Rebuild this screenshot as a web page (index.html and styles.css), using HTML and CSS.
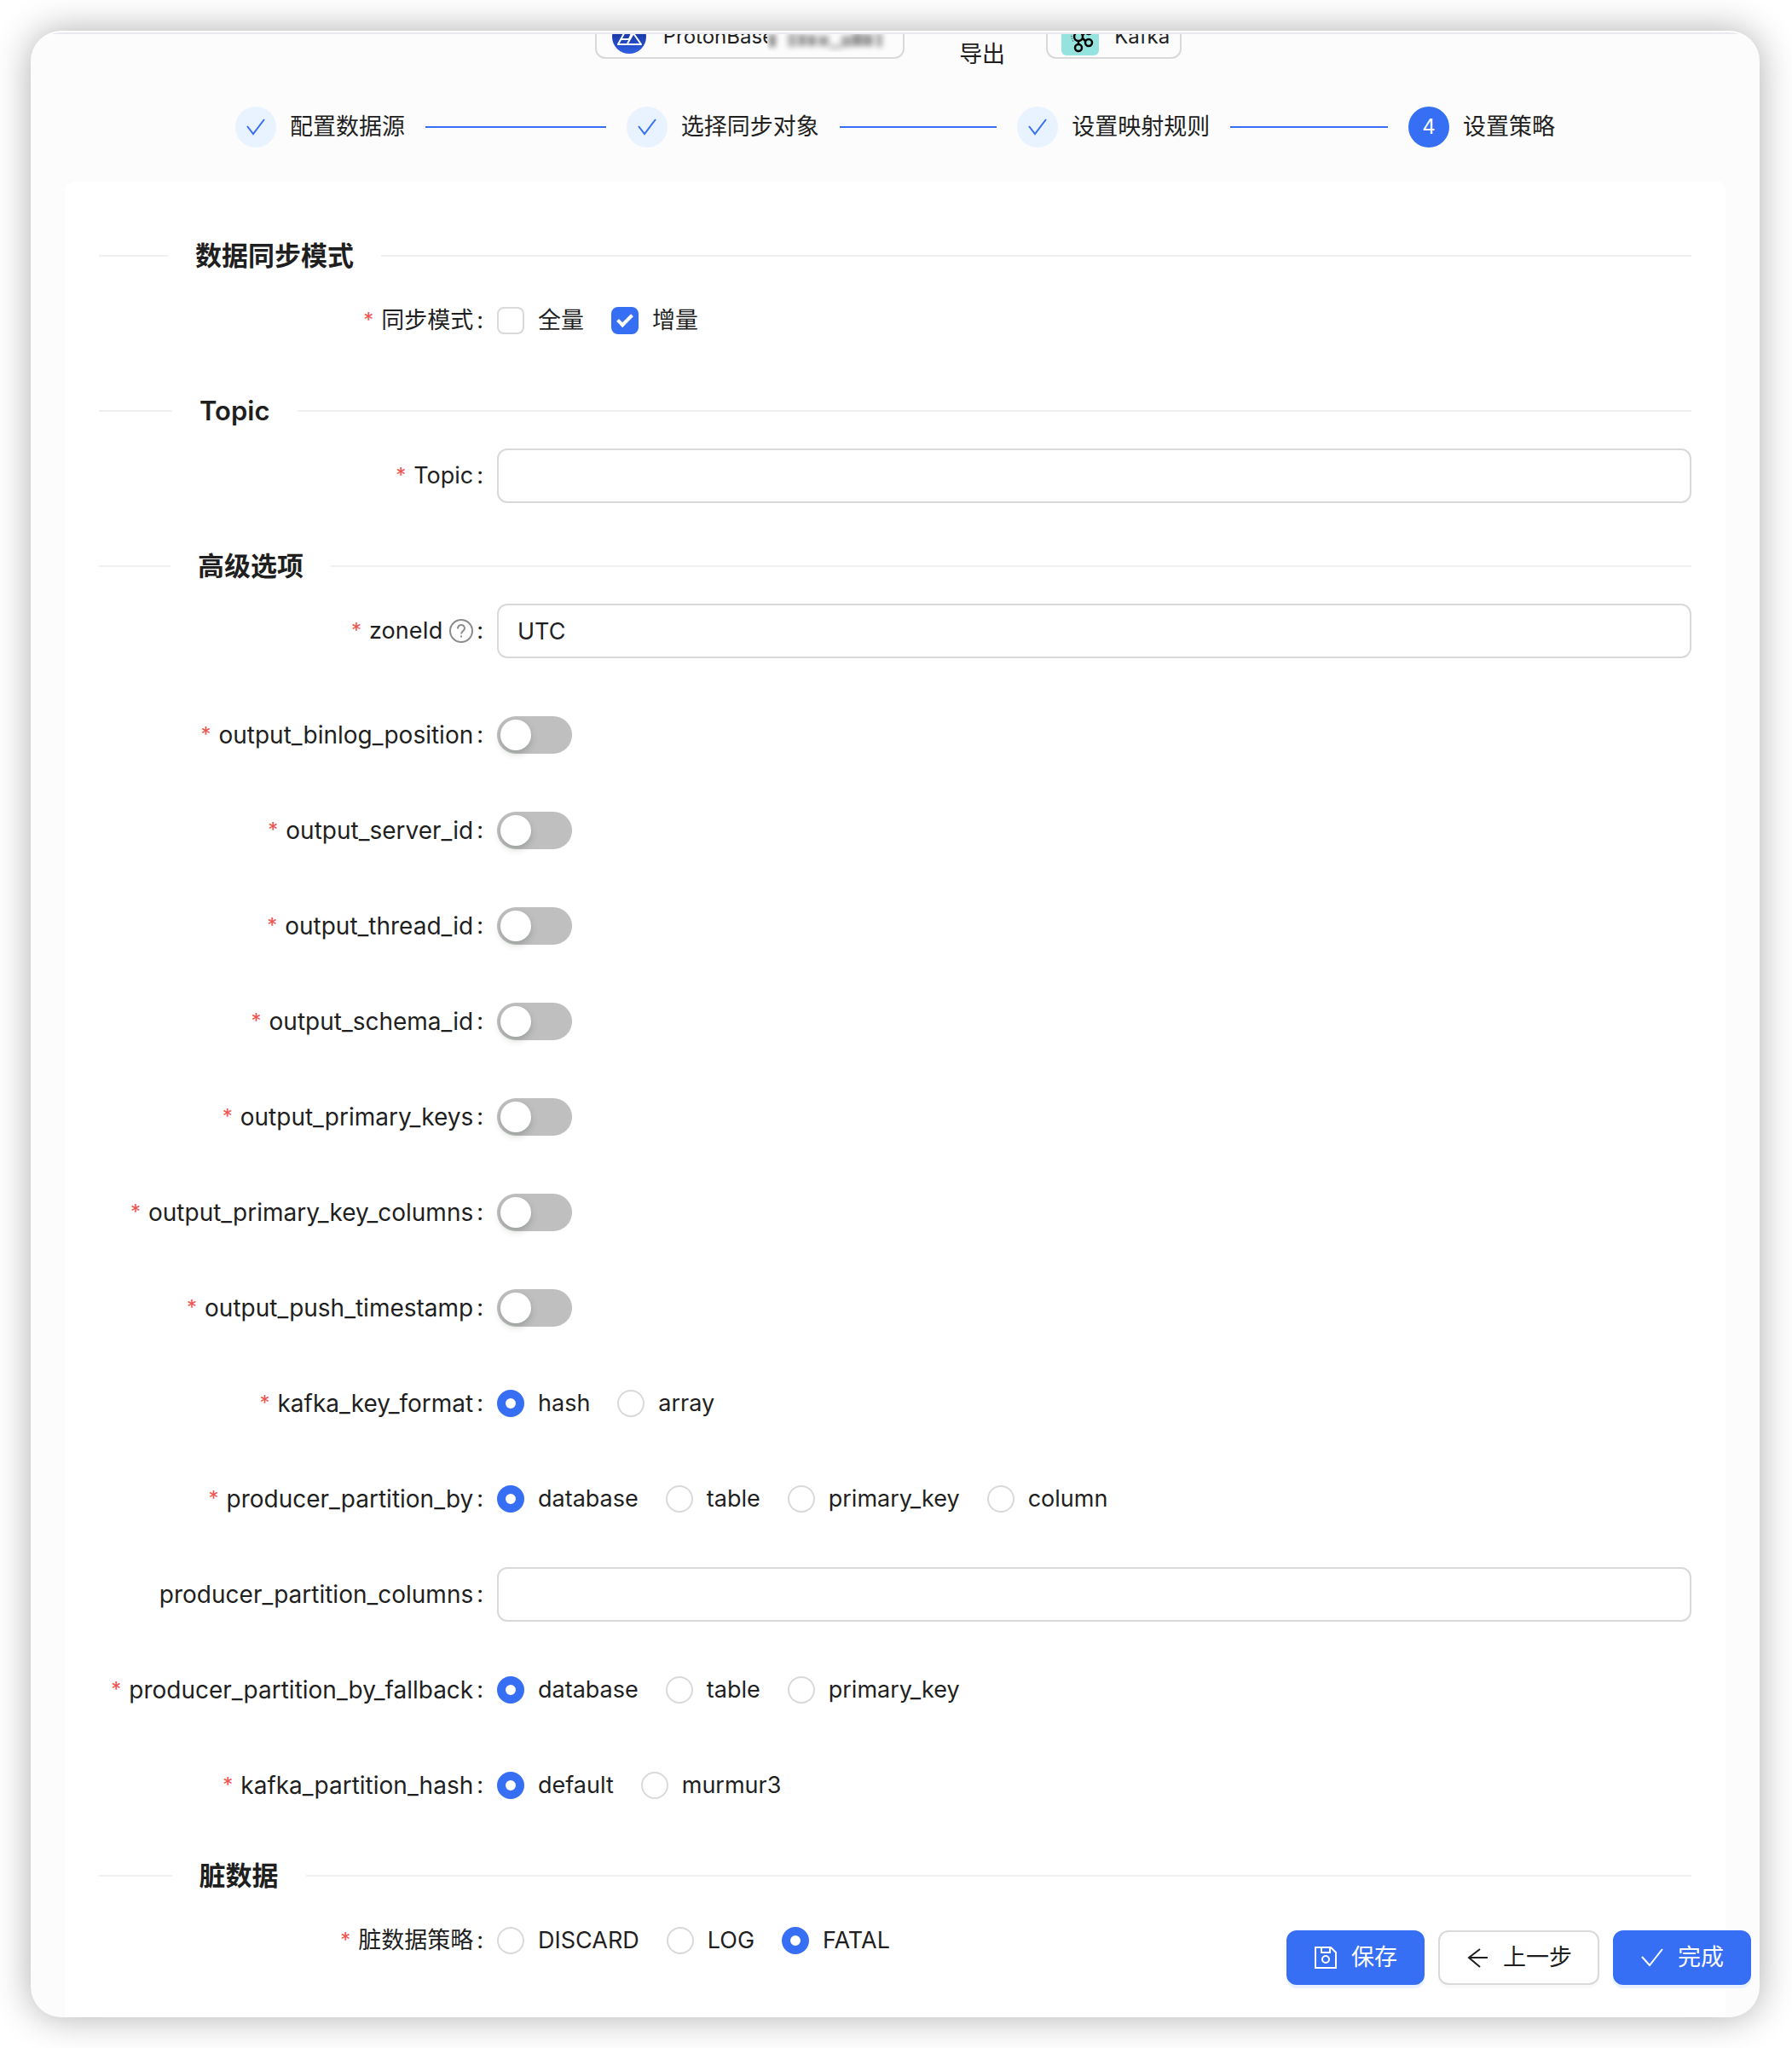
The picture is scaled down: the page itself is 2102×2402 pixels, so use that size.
FILE: index.html
```html
<!DOCTYPE html>
<html lang="zh-CN">

<head>
    <meta charset="UTF-8">
    <meta name="viewport" content="width=device-width, initial-scale=1.0">
    <title>设置策略</title>
    <link rel="stylesheet" href="styles.css">
</head>

<body>
    <main class="window">
        <header class="route">
            <div class="source">
                <svg class="source-icon" viewBox="0 0 44 44" aria-hidden="true">
                    <defs>
                        <linearGradient id="pb" x1="0" y1="0" x2="0" y2="1">
                            <stop offset="0.3" stop-color="#16309a" />
                            <stop offset="1" stop-color="#3060e4" />
                        </linearGradient>
                    </defs>
                    <circle cx="22" cy="22" r="20" fill="url(#pb)" />
                    <path d="M20 11L9 31H36L27 18L20 30M13 25H22L27 13" fill="none" stroke="#fff" stroke-width="2" stroke-linejoin="round" />
                </svg>
                <span>ProtonBase</span>
                <svg class="redacted" viewBox="0 0 147 36" aria-hidden="true">
                    <rect width="147" height="36" fill="#fcfcfc" />
                    <g class="smudge">
                        <rect x="2" y="15" width="8" height="15" fill="#8c8c8c" />
                        <rect x="24" y="14" width="10" height="16" fill="#b4b4b4" />
                        <rect x="36" y="15" width="10" height="14" fill="#a0a0a0" />
                        <rect x="48" y="16" width="9" height="13" fill="#969696" />
                        <rect x="60" y="17" width="12" height="12" fill="#a4a4a4" />
                        <rect x="73" y="27" width="14" height="6" fill="#c8c8c8" />
                        <rect x="87" y="17" width="12" height="13" fill="#a8a8a8" />
                        <rect x="100" y="14" width="11" height="15" fill="#949494" />
                        <rect x="112" y="15" width="12" height="14" fill="#9a9a9a" />
                        <rect x="128" y="14" width="7" height="16" fill="#aaaaaa" />
                    </g>
                </svg>
            </div>
            <span class="direction">导出</span>
            <div class="source">
                <svg class="source-icon" viewBox="0 0 44 44" aria-hidden="true">
                    <rect width="44" height="44" rx="6" fill="#95e3df" />
                    <g fill="none" stroke="#000" stroke-width="2.500">
                        <circle cx="20" cy="9" r="4" />
                        <circle cx="20" cy="22" r="5" />
                        <circle cx="20" cy="35" r="4" />
                        <circle cx="32" cy="15" r="4" />
                        <circle cx="32" cy="29" r="4" />
                        <path d="M20 13v4M20 27v4M25 20l3-3M25 24l3 3" />
                    </g>
                    <path d="M13 15Q10 21 14 28" fill="none" stroke="#000" stroke-dasharray="1 2" />
                </svg>
                <span>Kafka</span>
            </div>
        </header>

        <ol class="steps">
            <li class="step">
                <span class="step-icon"><svg class="tick" viewBox="0 0 24 24"><path d="M2 11L9 20L22 3" /></svg></span>
                <span>配置数据源</span>
            </li>
            <li class="step">
                <span class="step-icon"><svg class="tick" viewBox="0 0 24 24"><path d="M2 11L9 20L22 3" /></svg></span>
                <span>选择同步对象</span>
            </li>
            <li class="step">
                <span class="step-icon"><svg class="tick" viewBox="0 0 24 24"><path d="M2 11L9 20L22 3" /></svg></span>
                <span>设置映射规则</span>
            </li>
            <li class="step">
                <span class="step-icon current">4</span>
                <span>设置策略</span>
            </li>
        </ol>

        <form class="panel">
            <h2 class="divider"><span>数据同步模式</span></h2>
            <div class="row" role="group" aria-labelledby="l-mode">
                <span class="label required" id="l-mode">同步模式</span>
                <div class="options">
                    <label><input type="checkbox">全量</label>
                    <label><input type="checkbox" checked>增量</label>
                </div>
            </div>

            <h2 class="divider"><span>Topic</span></h2>
            <div class="row">
                <label class="label required" for="topic">Topic</label>
                <input class="text" type="text" id="topic">
            </div>

            <h2 class="divider"><span>高级选项</span></h2>
            <div class="row zone">
                <label class="label required" for="zone">zoneId
                    <svg class="help" viewBox="0 0 28 28" aria-hidden="true">
                        <circle cx="14" cy="14" r="13" />
                        <path d="M10 11.500C10 5.500 18 5.500 18 11C18 14 14 14 14 17.500M14 19.500V21.500" />
                    </svg>
                </label>
                <input class="text" type="text" id="zone" value="UTC">
            </div>
            <div class="row">
                <label class="label param required" for="binlog">output_binlog_position</label>
                <input class="switch" type="checkbox" role="switch" id="binlog">
            </div>
            <div class="row">
                <label class="label param required" for="server">output_server_id</label>
                <input class="switch" type="checkbox" role="switch" id="server">
            </div>
            <div class="row">
                <label class="label param required" for="thread">output_thread_id</label>
                <input class="switch" type="checkbox" role="switch" id="thread">
            </div>
            <div class="row">
                <label class="label param required" for="schema">output_schema_id</label>
                <input class="switch" type="checkbox" role="switch" id="schema">
            </div>
            <div class="row">
                <label class="label param required" for="keys">output_primary_keys</label>
                <input class="switch" type="checkbox" role="switch" id="keys">
            </div>
            <div class="row">
                <label class="label param required" for="key-columns">output_primary_key_columns</label>
                <input class="switch" type="checkbox" role="switch" id="key-columns">
            </div>
            <div class="row">
                <label class="label param required" for="push">output_push_timestamp</label>
                <input class="switch" type="checkbox" role="switch" id="push">
            </div>
            <div class="row" role="radiogroup" aria-labelledby="l-format">
                <span class="label param required" id="l-format">kafka_key_format</span>
                <div class="options">
                    <label><input type="radio" name="format" checked>hash</label>
                    <label><input type="radio" name="format">array</label>
                </div>
            </div>
            <div class="row" role="radiogroup" aria-labelledby="l-by">
                <span class="label param required" id="l-by">producer_partition_by</span>
                <div class="options">
                    <label><input type="radio" name="by" checked>database</label>
                    <label><input type="radio" name="by">table</label>
                    <label><input type="radio" name="by">primary_key</label>
                    <label><input type="radio" name="by">column</label>
                </div>
            </div>
            <div class="row">
                <label class="label param" for="columns">producer_partition_columns</label>
                <input class="text" type="text" id="columns">
            </div>
            <div class="row" role="radiogroup" aria-labelledby="l-fallback">
                <span class="label param required" id="l-fallback">producer_partition_by_fallback</span>
                <div class="options">
                    <label><input type="radio" name="fallback" checked>database</label>
                    <label><input type="radio" name="fallback">table</label>
                    <label><input type="radio" name="fallback">primary_key</label>
                </div>
            </div>
            <div class="row" role="radiogroup" aria-labelledby="l-hash">
                <span class="label param required" id="l-hash">kafka_partition_hash</span>
                <div class="options">
                    <label><input type="radio" name="hash" checked>default</label>
                    <label><input type="radio" name="hash">murmur3</label>
                </div>
            </div>

            <h2 class="divider"><span>脏数据</span></h2>
            <div class="row" role="radiogroup" aria-labelledby="l-dirty">
                <span class="label required" id="l-dirty">脏数据策略</span>
                <div class="options">
                    <label><input type="radio" name="dirty">DISCARD</label>
                    <label><input type="radio" name="dirty">LOG</label>
                    <label><input type="radio" name="dirty" checked>FATAL</label>
                </div>
            </div>
        </form>

        <!-- floating actions, stay over the form -->
        <div class="actions">
            <button class="btn primary" type="button">
                <svg viewBox="0 0 28 28"><path d="M2 2H20L26 8V26H2ZM9 2V8H19V2" /><circle cx="14" cy="16" r="4" /></svg>
                保存
            </button>
            <button class="btn" type="button">
                <svg viewBox="0 0 28 28"><path d="M26 14H4M17 4L4 14L17 25" /></svg>
                上一步
            </button>
            <button class="btn primary" type="button">
                <svg viewBox="0 0 28 28"><path d="M2 13L11 23L26 4" /></svg>
                完成
            </button>
        </div>
    </main>
</body>

</html>
```

FILE: styles.css
```css
* {
    box-sizing: border-box;
}

body {
    margin: 0;
    padding: 36px 38px 36px 36px;
    background-color: #ffffff;
    color: #1f1f1f;
    font-family: Inter, "Noto Sans CJK SC", sans-serif;
    font-size: 27px;
    line-height: 44px;
}

.window {
    position: relative;
    min-height: calc(100vh - 72px);
    padding: 0 40px;
    overflow: hidden;
    background-color: #fcfcfc;
    border-top: 2px solid #ffffff;
    border-radius: 36px;
    box-shadow: 0 0 44px rgba(0, 0, 0, 0.32);
    display: flex;
    flex-direction: column;
}

/* data source bar, scrolled half out of view */
.route {
    height: 60px;
    margin: 0 -40px;
    padding: 0 16px 12px 0;
    border-top: 2px solid #e8e8ee;
    display: flex;
    justify-content: center;
    align-items: flex-end;
    overflow: hidden;
}

.source {
    display: flex;
    align-items: center;
    height: 52px;
    padding: 0 12px 0 16px;
    margin-bottom: 17px;
    border: 2px solid #d9d9d9;
    border-radius: 12px;
    font-size: 24px;
}

.source-icon {
    width: 44px;
    height: 44px;
    margin-right: 18px;
}

.redacted {
    width: 147px;
    height: 36px;
    margin-left: -8px;
}

.smudge {
    filter: blur(3px);
}

.direction {
    margin: 0 48px 0 64px;
}

.steps {
    display: flex;
    margin: 0;
    padding: 27px 200px 0;
    list-style: none;
}

.step {
    display: flex;
    align-items: center;
    flex: 1;
    white-space: nowrap;
}

.step:last-child {
    flex: none;
}

.step:not(:last-child)::after {
    content: "";
    flex: 1;
    height: 2px;
    margin: 0 24px;
    background-color: #366ef4;
}

.step-icon {
    width: 48px;
    height: 48px;
    margin-right: 16px;
    border-radius: 50%;
    background-color: #e8f3ff;
    display: flex;
    justify-content: center;
    align-items: center;
    font-size: 24px;
}

.step-icon.current {
    background-color: #366ef4;
    color: #ffffff;
}

.tick {
    width: 24px;
    height: 24px;
    fill: none;
    stroke: #366ef4;
    stroke-width: 2;
}

.panel {
    flex: 1;
    margin-top: 40px;
    padding: 61px 40px 0;
    background-color: #ffffff;
    border-radius: 12px 12px 0 0;
}

.divider {
    display: flex;
    align-items: center;
    margin: 0;
    font-size: 31px;
    font-weight: 600;
    line-height: 52px;
    white-space: nowrap;
}

.divider::before,
.divider::after {
    content: "";
    height: 2px;
    background-color: #f0f0f0;
}

.divider::before {
    width: 5%;
}

.divider::after {
    width: 95%;
}

.divider span {
    padding: 0 32px;
}

.row {
    display: flex;
    align-items: center;
    height: 64px;
    margin-bottom: 48px;
}

.divider + .row {
    margin-top: 18px;
}

.row.zone {
    margin-bottom: 58px;
}

.label {
    display: flex;
    justify-content: flex-end;
    align-items: center;
    width: 25%;
    padding-right: 16px;
    white-space: nowrap;
}

.label.param {
    font-size: 28px;
}

.label::after {
    content: ":";
    margin-left: 4px;
    font-size: 27px;
}

.required::before {
    content: "*";
    margin-right: 9px;
    color: #f0524f;
    font-size: 24px;
}

.help {
    width: 28px;
    height: 28px;
    margin-left: 8px;
    fill: none;
    stroke: #8c8c8c;
    stroke-width: 2;
}

.text {
    flex: 1;
    height: 64px;
    padding: 0 22px;
    border: 2px solid #d9d9d9;
    border-radius: 12px;
    background-color: #ffffff;
    color: inherit;
    font: inherit;
}

.options {
    display: flex;
    gap: 32px;
}

.options label {
    display: flex;
    align-items: center;
    gap: 16px;
}

.options input {
    appearance: none;
    width: 32px;
    height: 32px;
    margin: 0;
    border: 2px solid #d9d9d9;
    border-radius: 50%;
    background-color: #ffffff;
}

.options input[type="radio"]:checked {
    border: 10px solid #366ef4;
}

.options input[type="checkbox"] {
    border-radius: 8px;
    display: flex;
    justify-content: center;
}

.options input[type="checkbox"]:checked {
    border-color: #366ef4;
    background-color: #366ef4;
}

.options input[type="checkbox"]:checked::after {
    content: "";
    width: 6px;
    height: 14px;
    margin-top: 3px;
    border: solid #ffffff;
    border-width: 0 4px 4px 0;
    transform: rotate(45deg);
}

.switch {
    appearance: none;
    width: 88px;
    height: 44px;
    margin: 0;
    padding: 4px;
    border-radius: 22px;
    background-color: #bfbfbf;
}

.switch::before {
    content: "";
    display: block;
    width: 36px;
    height: 36px;
    border-radius: 50%;
    background-color: #ffffff;
    box-shadow: 0 4px 8px rgba(0, 35, 11, 0.2);
}

.actions {
    position: absolute;
    right: 10px;
    bottom: 38px;
    display: flex;
    gap: 16px;
}

.btn {
    display: flex;
    align-items: center;
    gap: 16px;
    height: 64px;
    padding: 0 30px;
    border: 2px solid #d9d9d9;
    border-radius: 12px;
    background-color: #ffffff;
    box-shadow: 0 4px 0 rgba(0, 0, 0, 0.02);
    color: inherit;
    font: inherit;
}

.btn.primary {
    border-color: #366ef4;
    background-color: #366ef4;
    box-shadow: 0 4px 0 #e8f1ff;
    color: #ffffff;
}

.btn svg {
    width: 28px;
    height: 28px;
    fill: none;
    stroke: currentColor;
    stroke-width: 2;
}
```
